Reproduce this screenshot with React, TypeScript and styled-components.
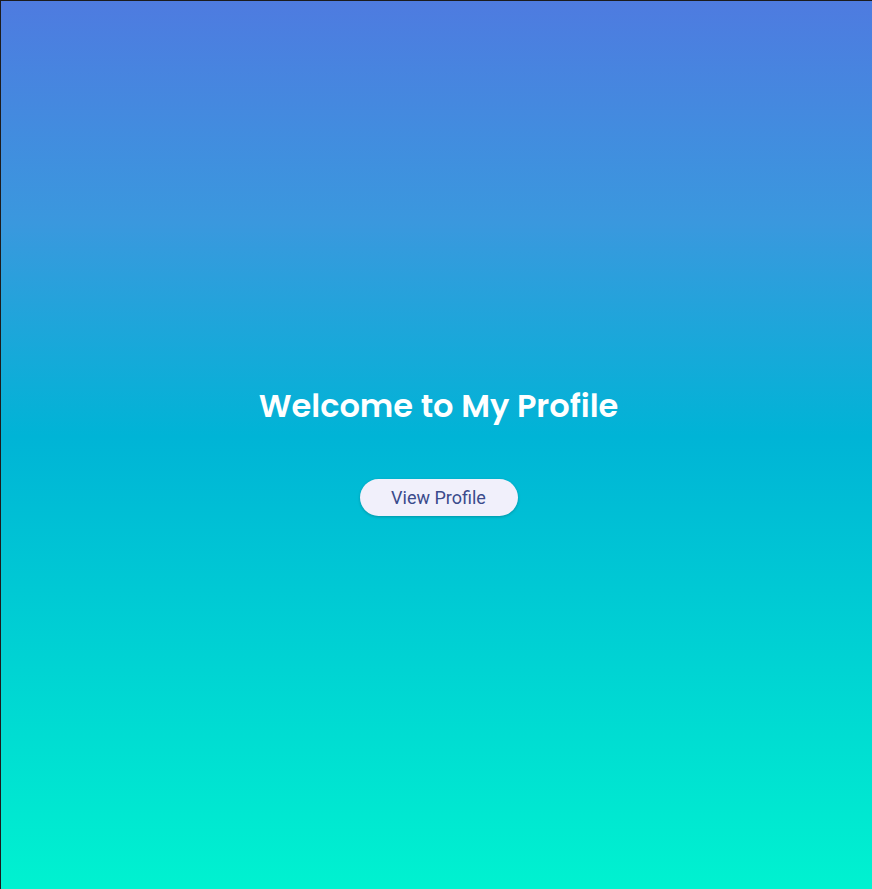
import React from "react";
import styled, { createGlobalStyle } from "styled-components";

const Global = createGlobalStyle`
  html, body { margin: 0; padding: 0; background: #1c1c1e; }
  * { box-sizing: border-box; }
`;

const Page = styled.main`
  margin: 1px 0 0 1px;
  height: 888px;
  background: linear-gradient(
    to bottom,
    #4e7be0 0%,
    #3a98de 25%,
    #00b4d6 49%,
    #00f2d0 100%
  );
  display: flex;
  flex-direction: column;
  align-items: center;
  justify-content: center;
  gap: 53px;
  padding-top: 13px;
  padding-left: 4px;
`;

const Title = styled.h1`
  margin: 0;
  font-family: "Poppins", "Inter", "Noto Sans", sans-serif;
  font-weight: 600;
  font-size: 32px;
  letter-spacing: 0;
  color: #ffffff;
  line-height: 1.2;
`;

const Button = styled.button`
  border: none;
  cursor: pointer;
  width: 158px;
  height: 37px;
  border-radius: 19px;
  background: #f1f0fb;
  color: #3b4b8c;
  font-family: Roboto, "Noto Sans", sans-serif;
  font-size: 18px;
  box-shadow: 0 1px 3px rgba(0, 0, 0, 0.22);
`;

export default function App() {
  return (
    <>
      <Global />
      <Page>
        <Title>Welcome to My Profile</Title>
        <Button>View Profile</Button>
      </Page>
    </>
  );
}
